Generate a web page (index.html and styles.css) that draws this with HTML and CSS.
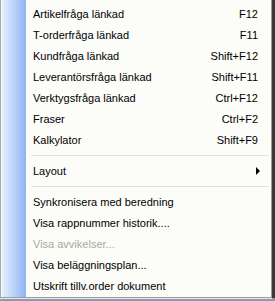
FILE: index.html
```html
<!DOCTYPE html>
<html lang="sv">
<head>
    <meta charset="UTF-8">
    <title>Meny</title>
    <link rel="stylesheet" href="styles.css">
</head>
<body>
    <div class="menu">
        <div class="item"><span class="label">Artikelfråga länkad</span><span class="key">F12</span></div>
        <div class="item"><span class="label">T-orderfråga länkad</span><span class="key">F11</span></div>
        <div class="item"><span class="label">Kundfråga länkad</span><span class="key">Shift+F12</span></div>
        <div class="item"><span class="label">Leverantörsfråga länkad</span><span class="key">Shift+F11</span></div>
        <div class="item"><span class="label">Verktygsfråga länkad</span><span class="key">Ctrl+F12</span></div>
        <div class="item"><span class="label">Fraser</span><span class="key">Ctrl+F2</span></div>
        <div class="item"><span class="label">Kalkylator</span><span class="key">Shift+F9</span></div>
        <div class="sep"></div>
        <div class="item"><span class="label">Layout</span><span class="arrow"></span></div>
        <div class="sep"></div>
        <div class="item"><span class="label">Synkronisera med beredning</span></div>
        <div class="item"><span class="label">Visa rappnummer historik....</span></div>
        <div class="item disabled"><span class="label">Visa avvikelser...</span></div>
        <div class="item"><span class="label">Visa beläggningsplan...</span></div>
        <div class="item"><span class="label">Utskrift tillv.order dokument</span></div>
    </div>
</body>
</html>
```

FILE: styles.css
```css
body {
    margin: 0;
    width: 275px;
    height: 301px;
    overflow: hidden;
    background-color: #8e99ab;
    font-family: "Liberation Sans", Arial, sans-serif;
    font-size: 11px;
    color: #000;
}

.menu {
    width: 270px;
    height: 294px;
    padding-top: 3px;
    background-color: #fcfcf9;
    background-image: linear-gradient(to right, #e6f0ff 0, #8cb4f2 24px, transparent 24px);
    background-repeat: no-repeat;
    background-position: 1px 0;
    border-left: 1px solid #a7a7a7;
    border-right: 1px solid #9c9c9c;
    border-bottom: 1px solid #9c9c9c;
    box-shadow: 3px 0 0 #3a3a3a, 0 1px 0 #e4e8ee;
}

.item {
    display: flex;
    align-items: center;
    height: 21px;
    padding-left: 32px;
    padding-right: 13px;
}

.label {
    flex: 1;
}

.key {
    text-align: right;
}

.disabled {
    color: #aca899;
}

.sep {
    height: 10px;
    display: flex;
    align-items: center;
    margin-left: 30px;
    margin-right: 2px;
}

.sep::before {
    content: "";
    flex: 1;
    height: 1px;
    background-color: #e2e0d8;
}

.arrow {
    width: 0;
    height: 0;
    margin-right: -2px;
    border-top: 4px solid transparent;
    border-bottom: 4px solid transparent;
    border-left: 4px solid #000;
}
```
